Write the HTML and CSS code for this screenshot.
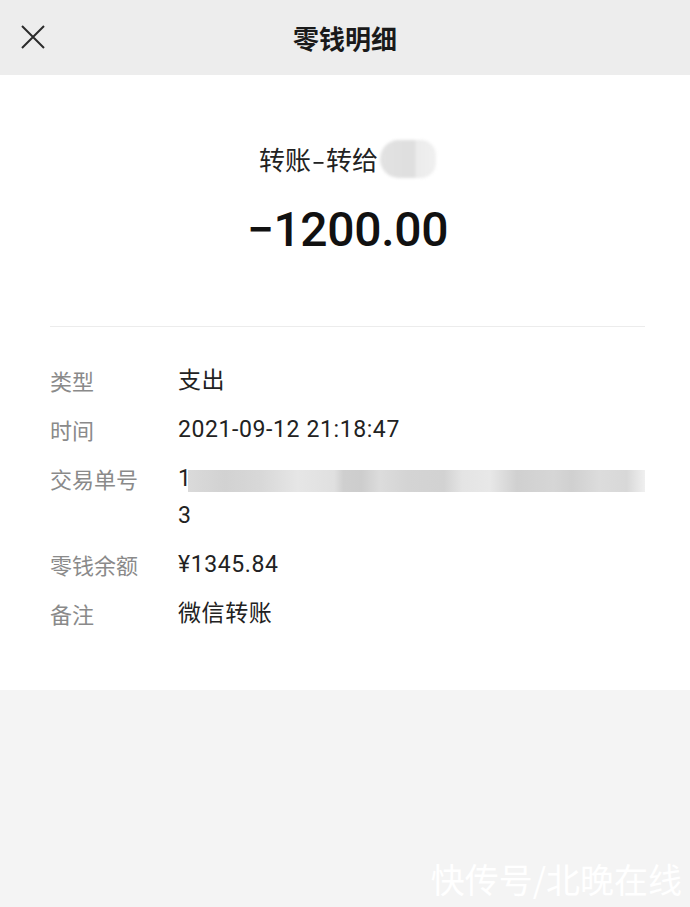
FILE: index.html
```html
<!DOCTYPE html>
<html lang="zh-CN">
<head>
    <meta charset="UTF-8">
    <meta name="viewport" content="width=device-width, initial-scale=1.0">
    <title>零钱明细</title>
    <link rel="stylesheet" href="styles.css">
</head>
<body>
    <div class="top-bar">
        <span class="close-btn">
            <svg width="26" height="26" viewBox="0 0 26 26"><path d="M2 2 L24 24 M24 2 L2 24" stroke="#2b2b2b" stroke-width="2" fill="none"/></svg>
        </span>
        <h1>零钱明细</h1>
    </div>

    <div class="detail-card">
        <div class="summary">
            <p class="summary-title">转账<span class="dash">-</span>转给<span class="blur-name"></span></p>
            <p class="amount">−1200.00</p>
        </div>

        <div class="rows">
            <div class="row">
                <span class="label">类型</span>
                <span class="value">支出</span>
            </div>
            <div class="row">
                <span class="label">时间</span>
                <span class="value">2021-09-12 21:18:47</span>
            </div>
            <div class="row">
                <span class="label">交易单号</span>
                <span class="value">
                    <span class="order-line">1<span class="blur-bar"></span></span>
                    <span class="order-line">3</span>
                </span>
            </div>
            <div class="row">
                <span class="label">零钱余额</span>
                <span class="value">¥1345.84</span>
            </div>
            <div class="row">
                <span class="label">备注</span>
                <span class="value">微信转账</span>
            </div>
        </div>
    </div>

    <div class="watermark">快传号/北晚在线</div>
</body>
</html>
```

FILE: styles.css
```css
body {
    margin: 0;
    height: 907px;
    background: #f4f4f4;
    font-family: "Noto Sans CJK SC", "Noto Sans", sans-serif;
    color: #1f1f1f;
    position: relative;
    overflow: hidden;
}

.top-bar {
    height: 75px;
    background: #ededed;
    display: flex;
    align-items: center;
    justify-content: center;
    position: relative;
}
.top-bar h1 {
    margin: 0;
    font-size: 26px;
    font-weight: 700;
    color: #1a1a1a;
}
.close-btn {
    position: absolute;
    left: 20px;
    top: 24px;
    width: 26px;
    height: 26px;
}

.detail-card {
    background: #fff;
    padding: 0 45px 58px 50px;
}

.summary {
    text-align: center;
    padding-top: 62px;
    padding-bottom: 66px;
    border-bottom: 1px solid #ececec;
}
.summary p { margin: 0; }
.summary-title {
    font-size: 26px;
    line-height: 44px;
    color: #222;
    display: inline-flex;
    align-items: center;
}
.dash {
    display: inline-block;
    margin: 0 3px;
    transform: scaleX(1.5);
}
.blur-name {
    display: inline-block;
    width: 56px;
    height: 38px;
    margin-left: 2px;
    border-radius: 20px 16px 16px 20px;
    background: linear-gradient(90deg, #e2e2e2 0%, #dedede 62%, #ebebeb 64%, #f0f0f0 100%);
    filter: blur(1.5px);
}
.amount {
    font-family: Roboto, "Noto Sans", sans-serif;
    font-size: 48px;
    font-weight: 500;
    letter-spacing: -0.3px;
    line-height: 60px;
    margin-top: 19px !important;
    color: #111;
}

.rows {
    padding-top: 35px;
    display: flex;
    flex-direction: column;
    gap: 12px;
}
.row {
    display: flex;
    font-size: 22px;
    line-height: 37px;
}
.label {
    width: 128px;
    flex-shrink: 0;
    color: #8a8a8a;
}
.value {
    font-family: Roboto, "Noto Sans CJK SC", sans-serif;
    font-size: 23px;
    letter-spacing: 0.6px;
    color: #222;
    flex: 1;
}
.order-line {
    display: flex;
    align-items: center;
}
.blur-bar {
    display: inline-block;
    height: 22px;
    flex: 1;
    margin-left: -4px;
    margin-top: 4px;
    background: linear-gradient(90deg,
        #dadada 0%, #d2d2d2 8%, #d8d8d8 16%, #e6e6e6 24%, #e0e0e0 32%,
        #cfcfcf 34%, #cdcdcd 38%, #dcdcdc 42%, #d4d4d4 48%, #d2d2d2 56%,
        #e4e4e4 60%, #e8e8e8 66%, #d0d0d0 72%, #d6d6d6 80%, #d0d0d0 84%,
        #dcdcdc 90%, #d8d8d8 96%, #f0f0f0 100%);
    filter: blur(0.6px);
}

.watermark {
    position: absolute;
    right: 8px;
    bottom: 4px;
    font-size: 34px;
    color: #fff;
}
```
